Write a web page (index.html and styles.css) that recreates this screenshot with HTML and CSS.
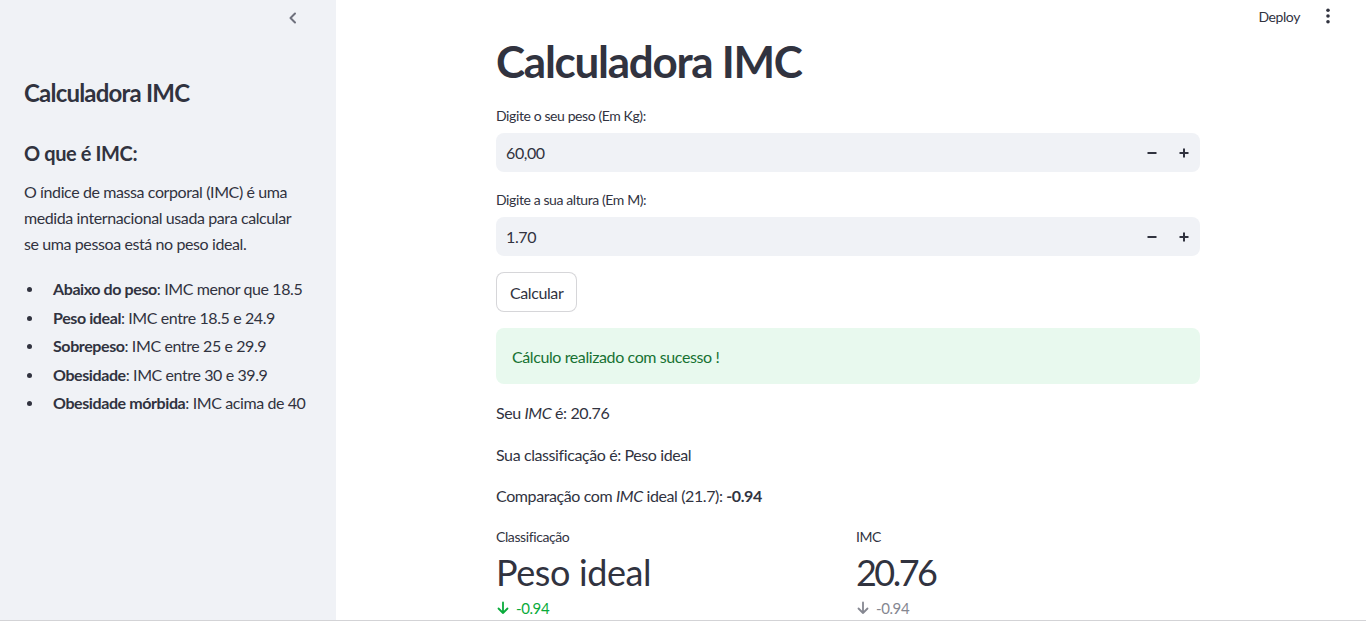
FILE: index.html
```html
<!DOCTYPE html>
<html lang="pt-BR">
<head>
<meta charset="utf-8">
<title>Calculadora IMC</title>
<link rel="stylesheet" href="styles.css">
</head>
<body>
<div class="app">
  <aside class="sidebar">
    <div class="sidebar-top">
      <button class="collapse" aria-label="Recolher barra lateral">
        <svg width="10" height="12" viewBox="0 0 10 12"><polyline points="7,1.5 2.5,6 7,10.5" fill="none" stroke="currentColor" stroke-width="2" stroke-linecap="round" stroke-linejoin="round"/></svg>
      </button>
    </div>
    <h2 class="side-title">Calculadora IMC</h2>
    <h3 class="side-sub">O que é IMC:</h3>
    <p class="side-text">O índice de massa corporal (IMC) é uma medida internacional usada para calcular se uma pessoa está no peso ideal.</p>
    <ul class="side-list">
      <li><span><strong>Abaixo do peso</strong>: IMC menor que 18.5</span></li>
      <li><span><strong>Peso ideal</strong>: IMC entre 18.5 e 24.9</span></li>
      <li><span><strong>Sobrepeso</strong>: IMC entre 25 e 29.9</span></li>
      <li><span><strong>Obesidade</strong>: IMC entre 30 e 39.9</span></li>
      <li><span><strong>Obesidade mórbida</strong>: IMC acima de 40</span></li>
    </ul>
  </aside>
  <main class="main">
    <header class="toolbar">
      <span class="deploy">Deploy</span>
      <button class="kebab" aria-label="Menu">
        <svg width="4" height="16" viewBox="0 0 4 16"><circle cx="2" cy="2.3" r="1.8"/><circle cx="2" cy="8" r="1.8"/><circle cx="2" cy="13.7" r="1.8"/></svg>
      </button>
    </header>
    <section class="content">
      <h1 class="title">Calculadora IMC</h1>
      <div class="field">
        <label class="field-label">Digite o seu peso (Em Kg):</label>
        <div class="num-input">
          <span class="num-value">60,00</span>
          <button class="step" aria-label="Diminuir"><svg width="10" height="10" viewBox="0 0 10 10"><path d="M0.5 5H9.5" stroke="currentColor" stroke-width="2"/></svg></button>
          <button class="step" aria-label="Aumentar"><svg width="10" height="10" viewBox="0 0 10 10"><path d="M0.5 5H9.5M5 0.5V9.5" stroke="currentColor" stroke-width="2"/></svg></button>
        </div>
      </div>
      <div class="field">
        <label class="field-label">Digite a sua altura (Em M):</label>
        <div class="num-input">
          <span class="num-value">1.70</span>
          <button class="step" aria-label="Diminuir"><svg width="10" height="10" viewBox="0 0 10 10"><path d="M0.5 5H9.5" stroke="currentColor" stroke-width="2"/></svg></button>
          <button class="step" aria-label="Aumentar"><svg width="10" height="10" viewBox="0 0 10 10"><path d="M0.5 5H9.5M5 0.5V9.5" stroke="currentColor" stroke-width="2"/></svg></button>
        </div>
      </div>
      <div><button class="btn">Calcular</button></div>
      <div class="alert">Cálculo realizado com sucesso !</div>
      <p class="txt">Seu <em>IMC</em> é: 20.76</p>
      <p class="txt">Sua classificação é: Peso ideal</p>
      <p class="txt">Comparação com <em>IMC</em> ideal (21.7): <strong>-0.94</strong></p>
      <div class="metrics">
        <div class="metric">
          <div class="metric-label">Classificação</div>
          <div class="metric-value">Peso ideal</div>
          <div class="metric-delta good">
            <svg width="14" height="14" viewBox="0 0 14 14"><path d="M7 1.5V12M2.5 7.5L7 12L11.5 7.5" fill="none" stroke="currentColor" stroke-width="1.8" stroke-linecap="round" stroke-linejoin="round"/></svg>
            <span>-0.94</span>
          </div>
        </div>
        <div class="metric">
          <div class="metric-label">IMC</div>
          <div class="metric-value numeric">20.76</div>
          <div class="metric-delta off">
            <svg width="14" height="14" viewBox="0 0 14 14"><path d="M7 1.5V12M2.5 7.5L7 12L11.5 7.5" fill="none" stroke="currentColor" stroke-width="1.8" stroke-linecap="round" stroke-linejoin="round"/></svg>
            <span>-0.94</span>
          </div>
        </div>
      </div>
    </section>
  </main>
</div>
<div class="frame-line"></div>
</body>
</html>
```

FILE: styles.css
```css
* { box-sizing: border-box; }
html, body {
  margin: 0;
  padding: 0;
  height: 100%;
  overflow: hidden;
}
body {
  font-family: "Lato", "Liberation Sans", sans-serif;
  color: #31333f;
  background: #ffffff;
  font-size: 16px;
  letter-spacing: -0.025em;
}
button {
  font-family: inherit;
  color: inherit;
  background: none;
  border: none;
  padding: 0;
  cursor: pointer;
  letter-spacing: inherit;
}
.app {
  display: flex;
  height: 100%;
}
.sidebar {
  width: 336px;
  flex: none;
  background: #f0f2f6;
  padding: 0 24px;
  display: flex;
  flex-direction: column;
}
.sidebar-top {
  height: 36px;
  display: flex;
  align-items: center;
  justify-content: flex-end;
  padding-right: 14px;
}
.collapse {
  color: #6f717d;
  display: flex;
}
.side-title {
  margin: 43px 0 0;
  font-size: 24px;
  line-height: 28px;
  font-weight: 700;
  letter-spacing: -0.033em;
}
.side-sub {
  margin: 34px 0 0;
  font-size: 20px;
  line-height: 24px;
  font-weight: 700;
}
.side-text {
  margin: 14px 0 0;
  max-width: 280px;
  font-size: 16px;
  line-height: 26px;
}
.side-list {
  list-style: none;
  margin: 19px 0 0;
  padding: 0;
  display: flex;
  flex-direction: column;
  gap: 2.6px;
}
.side-list li {
  display: flex;
  align-items: flex-start;
  font-size: 16px;
  line-height: 26px;
  white-space: nowrap;
}
.side-list li::before {
  content: "";
  width: 5px;
  height: 5px;
  border-radius: 50%;
  background: #31333f;
  margin: 11px 21.5px 0 2.5px;
  flex: none;
}
.main {
  flex: 1;
  display: flex;
  flex-direction: column;
  min-width: 0;
}
.toolbar {
  height: 32px;
  display: flex;
  align-items: center;
  justify-content: flex-end;
  gap: 26px;
  padding-right: 36px;
}
.deploy {
  font-size: 14px;
}
.kebab {
  display: flex;
  fill: #31333f;
}
.content {
  width: 704px;
  margin-left: 160px;
  padding-top: 3px;
  display: flex;
  flex-direction: column;
  gap: 16px;
}
.title {
  margin: 0;
  font-size: 44px;
  line-height: 52px;
  font-weight: 700;
  margin-bottom: 1px;
  letter-spacing: -0.029em;
}
.field {
  display: flex;
  flex-direction: column;
}
.field-label {
  font-size: 14px;
  line-height: 24px;
  margin-bottom: 5px;
}
.num-input {
  height: 39px;
  background: #f0f2f6;
  border-radius: 8px;
  display: flex;
  align-items: center;
}
.num-value {
  flex: 1;
  padding-left: 10px;
  font-size: 16px;
}
.step {
  width: 32px;
  height: 39px;
  display: flex;
  align-items: center;
  justify-content: center;
  color: #31333f;
}
.btn {
  height: 40px;
  padding: 0 13px;
  border: 1px solid rgba(49, 51, 63, 0.2);
  border-radius: 8px;
  background: #ffffff;
  font-size: 16px;
}
.alert {
  height: 56px;
  display: flex;
  align-items: center;
  padding: 0 16px;
  border-radius: 8px;
  background: #e8f9ee;
  color: #177233;
  font-size: 16px;
}
.txt {
  margin: 0;
  font-size: 16px;
  line-height: 25.6px;
}
.metrics {
  display: grid;
  grid-template-columns: 1fr 1fr;
  gap: 16px;
}
.metric-label {
  font-size: 14px;
  line-height: 24px;
}
.metric-value {
  font-size: 36px;
  line-height: 46px;
}
.metric-value.numeric {
  letter-spacing: -0.07em;
}
.metric-delta {
  margin-top: 3px;
  display: flex;
  align-items: center;
  gap: 6px;
  font-size: 15px;
  line-height: 20px;
}
.metric-delta.good { color: #09ab3b; }
.metric-delta.off { color: #858791; }
.frame-line {
  position: fixed;
  left: 0;
  right: 0;
  bottom: 0;
  height: 1px;
  background: #d3d3d6;
}
```
